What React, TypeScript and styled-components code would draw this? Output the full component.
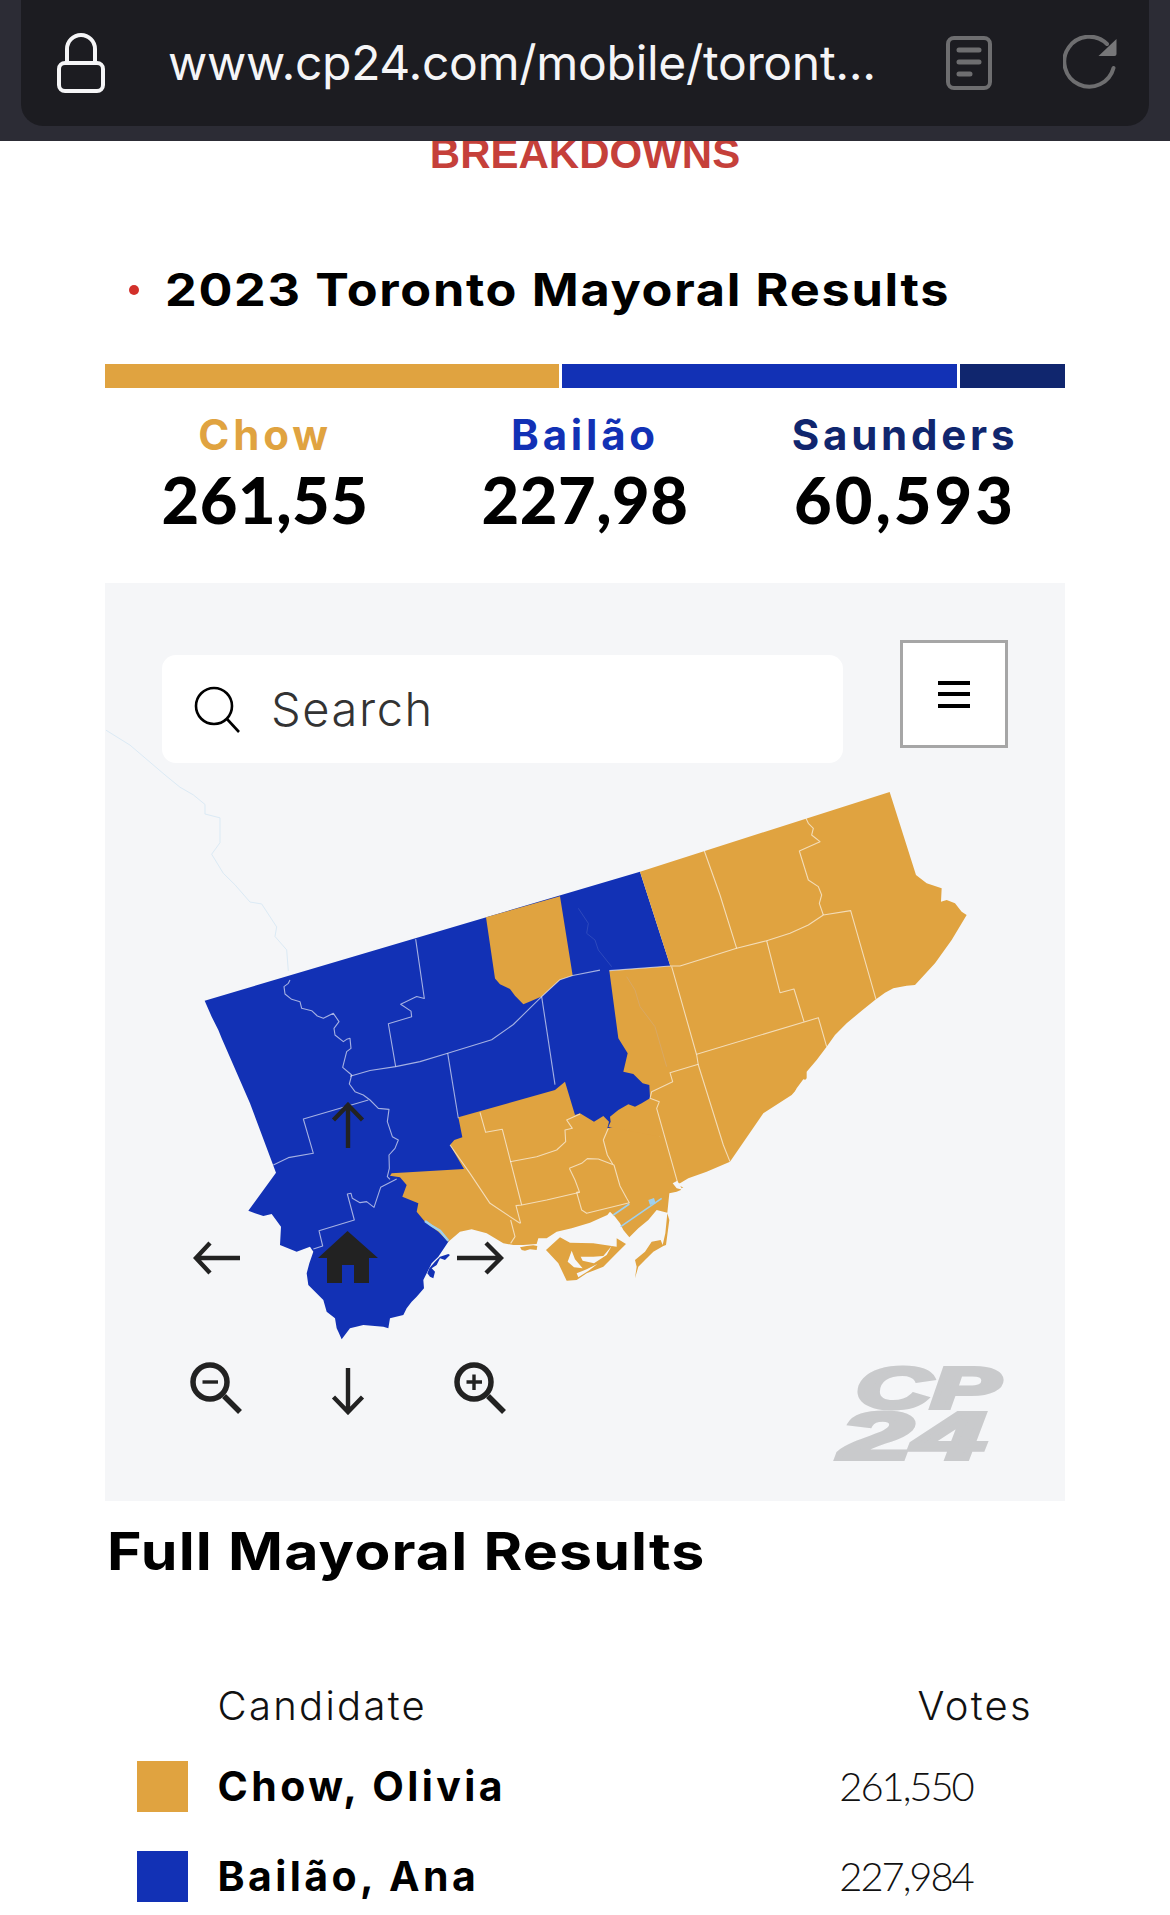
import React from "react";
import styled, { createGlobalStyle } from "styled-components";

const ORANGE = "#e0a340";
const BLUE = "#1231b5";
const NAVY = "#10266e";
const BG = "#f5f6f8";
const WIDE = `Inter, "Liberation Sans", sans-serif`;
const NARROW = `Lato, "Liberation Sans", sans-serif`;

const Global = createGlobalStyle`
  html, body { margin: 0; padding: 0; background: #fff; }
`;

const Page = styled.div`
  width: 1170px;
  height: 1915px;
  overflow: hidden;
  background: #fff;
`;

const BrowserBar = styled.header`
  position: relative;
  z-index: 2;
  height: 141px;
  background: #2c2c35;
  padding: 0 21px;
  box-sizing: border-box;
`;

const AddressPill = styled.div`
  height: 126px;
  background: #1c1c21;
  border-radius: 0 0 22px 22px;
  display: flex;
  align-items: center;
  padding-left: 36px;
  padding-right: 28.5px;
  box-sizing: border-box;
`;

const AddressText = styled.span`
  font-family: ${WIDE};
  font-size: 48px;
  line-height: 126px;
  color: #f5f5f7;
  margin-left: 63px;
  letter-spacing: -0.3px;
  flex: 1;
  white-space: nowrap;
`;

const BarIcon = styled.svg`
  display: block;
  flex: none;
`;

const Breakdowns = styled.div`
  margin-top: -7px;
  height: 40px;
  font: bold 42px/40px "Liberation Sans", Arial, sans-serif;
  color: #c5403a;
  text-align: center;
`;

const TitleRow = styled.div`
  display: flex;
  align-items: center;
  margin-top: 86px;
  padding-left: 129px;
  height: 60px;
`;

const RedDot = styled.span`
  width: 10px;
  height: 10px;
  border-radius: 50%;
  background: #d2302a;
  margin-right: 26px;
`;

const Title = styled.h1`
  margin: 0;
  font: 700 45px/60px ${WIDE};
  letter-spacing: 1.5px;
  color: #000;
  white-space: nowrap;
  transform: scaleX(1.12);
  transform-origin: left center;
`;

const ShareBar = styled.div`
  display: flex;
  gap: 3px;
  margin: 44px 105px 0;
  height: 24px;
`;

const ShareSegment = styled.div<{ $color: string; $w: number }>`
  width: ${(p) => p.$w}px;
  background: ${(p) => p.$color};
`;

const Tallies = styled.div`
  display: grid;
  grid-template-columns: repeat(3, 320px);
  margin: 20px 105px 0;
`;

const Tally = styled.div`
  text-align: center;
`;

const TallyName = styled.div<{ $color: string }>`
  font: 700 42px/53px ${WIDE};
  letter-spacing: 3.8px;
  color: ${(p) => p.$color};
`;

const TallyVotes = styled.div<{ $spread?: number }>`
  font: 900 65px/76px ${NARROW};
  letter-spacing: ${(p) => p.$spread ?? 0.5}px;
  color: #000;
`;

const MapPanel = styled.section`
  position: relative;
  width: 960px;
  height: 918px;
  margin: 46px 105px 0;
  background: ${BG};
  overflow: hidden;
`;

const Toolbar = styled.div`
  position: relative;
  z-index: 1;
  display: flex;
  align-items: flex-start;
  gap: 57px;
  padding: 57px 0 0 57px;
`;

const SearchBox = styled.div`
  width: 681px;
  height: 108px;
  margin-top: 15px;
  background: #fff;
  border-radius: 14px;
  display: flex;
  align-items: center;
  padding-left: 30px;
  box-sizing: border-box;
`;

const SearchText = styled.span`
  margin-left: 29px;
  font: 300 47px/108px ${WIDE};
  letter-spacing: 1.6px;
  color: #333;
`;

const MenuButton = styled.div`
  width: 108px;
  height: 108px;
  box-sizing: border-box;
  background: #fff;
  border: 3px solid #a6a6a6;
  display: flex;
  flex-direction: column;
  align-items: center;
  justify-content: center;
  gap: 7.5px;
`;

const MenuLine = styled.span`
  width: 32px;
  height: 4px;
  background: #000;
`;

const MapCanvas = styled.svg`
  position: absolute;
  left: 0;
  top: 0;
`;

const Ward = styled.polygon<{ $fill: string }>`
  fill: ${(p) => p.$fill};
`;

const Border = styled.polyline`
  fill: none;
  stroke: #fff;
  stroke-opacity: 0.62;
  stroke-width: 1.1px;
  stroke-linejoin: round;
  vector-effect: non-scaling-stroke;
`;

const Stream = styled.polyline<{ $color: string; $w?: number }>`
  fill: none;
  stroke: ${(p) => p.$color};
  stroke-width: ${(p) => p.$w ?? 1}px;
  vector-effect: non-scaling-stroke;
`;

const ControlIcon = styled.svg<{ $x: number; $y: number }>`
  position: absolute;
  left: ${(p) => p.$x - 105}px;
  top: ${(p) => p.$y - 583}px;
  display: block;
`;

const LogoCanvas = styled.svg`
  position: absolute;
  left: 705px;
  top: 755px;
  overflow: visible;
`;

const LogoText = styled.text<{ $size: number }>`
  font: italic 900 ${(p) => p.$size}px "Liberation Sans", Arial, sans-serif;
  fill: #c9cacc;
  stroke: #c9cacc;
  stroke-width: 4px;
`;

const ResultsHeading = styled.h2`
  margin: 20px 0 0 107px;
  font: 700 52px/62px ${WIDE};
  letter-spacing: 1px;
  color: #000;
  white-space: nowrap;
  transform: scaleX(1.135);
  transform-origin: left center;
`;

const ResultsTable = styled.div`
  display: grid;
  grid-template-columns: 51px 620px 180px;
  column-gap: 29.5px;
  margin: 0 0 0 137px;
  padding-top: 100px;
`;

const HeadCell = styled.div<{ $right?: boolean }>`
  grid-column: ${(p) => (p.$right ? 3 : 2)};
  font: 300 40px/46px ${WIDE};
  letter-spacing: 2.3px;
  color: #111;
  text-align: ${(p) => (p.$right ? "right" : "left")};
  ${(p) => (p.$right ? "margin-right: 14px;" : "")}
  height: 78px;
`;

const Swatch = styled.div<{ $color: string }>`
  width: 51px;
  height: 51px;
  background: ${(p) => p.$color};
  margin-bottom: 39px;
`;

const NameCell = styled.div`
  font: 700 41px/51px ${WIDE};
  letter-spacing: 3.4px;
  color: #000;
`;

const VotesCell = styled.div`
  font: 300 40px/51px ${NARROW};
  letter-spacing: -2.1px;
  color: #111;
  width: 134px;
  text-align: center;
  margin-left: -28px;
`;

const Z5 = "translate(190 980) scale(0.33333)";
const Z6 = "translate(390 1060) scale(0.33333)";
const Z3 = "translate(560 770) scale(0.33333)";
const Z2 = "translate(180 770) scale(0.33333 0.3827)";

const BLUE_AREA =
  "44,62 1350,-325 1441,-42 1395,400 1000,650 800,730 775,785 745,830 725,850 710,880 700,900 702,925 680,950 665,965 650,985 640,1005 600,1015 595,1045 580,1040 520,1035 480,1045 455,1078 445,1055 440,1045 435,1015 410,995 400,960 355,915 350,880 358,850 370,815 360,800 320,815 270,795 273,740 245,702 220,708 195,700 175,692 258,578 180,370 95,175 85,150 65,110";

const EAST_AREA =
  "240,305 989,66 1068,315 1100,340 1145,355 1143,395 1160,390 1185,400 1205,425 1220,435 1175,510 1125,580 1065,645 1040,647 1000,655 975,668 945,690 905,722 860,760 825,795 800,830 770,870 740,905 740,925 695,975 610,1030 510,1175 440,1205 385,1225 360,1240 340,1240 300,1100 145,1070 152,1055 150,1040 175,1020 205,1003 225,1010 245,1000 270,985 268,945 248,940 220,912 190,905 203,850 175,805 148,602 331,588";

const CENTRAL_AREA =
  "205,172 495,90 525,65 555,165 570,160 612,185 640,168 657,185 652,205 760,180 880,300 875,345 852,362 870,378 885,385 860,395 838,400 832,458 800,450 775,480 745,505 718,532 700,510 690,490 675,470 660,455 652,465 630,475 600,488 545,505 500,515 470,535 445,535 440,552 400,555 370,555 340,550 290,520 245,508 210,515 175,545 145,515 105,485 80,455 85,430 37,410 50,375 30,352 0,347 5,340 222,327 180,255 193,240 217,232";

const ISLAND =
  "468,570 510,532 540,548 610,550 680,560 680,535 708,552 680,580 640,620 590,640 560,660 530,662 505,610";

const SPIT =
  "832,460 826,520 818,555 812,540 785,545 765,575 735,600 740,620 735,655 745,620 765,600 790,575 820,558 828,555 838,480";

const Icon = {
  up: "M9.5 18 L24 3 L38.5 18 M24 3 V46",
  down: "M9.5 32 L24 47 L38.5 32 M24 47 V3",
  left: "M17 3 L3 18 L17 33 M3 18 H47",
  right: "M30 3 L45 18 L30 33 M45 18 H1",
};

export default function App() {
  return (
    <Page>
      <Global />
      <BrowserBar>
        <AddressPill>
          <BarIcon width="48" height="60" viewBox="0 0 48 60">
            <path d="M10 30 V16 a14 14 0 0 1 28 0 V30" fill="none" stroke="#f5f5f7" strokeWidth="4" />
            <rect x="2" y="30" width="44" height="28" rx="6" fill="none" stroke="#f5f5f7" strokeWidth="4" />
          </BarIcon>
          <AddressText>www.cp24.com/mobile/toront...</AddressText>
          <BarIcon width="46" height="54" viewBox="0 0 46 54" style={{ marginRight: 71 }}>
            <rect x="2" y="2" width="42" height="50" rx="6" fill="none" stroke="#6e6e70" strokeWidth="4" />
            <path d="M13 14 H33 M13 26 H33 M13 38 H24" stroke="#6e6e70" strokeWidth="5" strokeLinecap="round" />
          </BarIcon>
          <BarIcon width="58" height="56" viewBox="0 0 58 56">
            <path d="M50.5 33 A25 25 0 1 1 44 9" fill="none" stroke="#6e6e70" strokeWidth="4" strokeLinecap="round" />
            <path d="M53.5 4 V19 Q53.5 21 51.5 21 H35.5 Z" fill="#777779" />
          </BarIcon>
        </AddressPill>
      </BrowserBar>

      <Breakdowns>BREAKDOWNS</Breakdowns>

      <TitleRow>
        <RedDot />
        <Title>2023 Toronto Mayoral Results</Title>
      </TitleRow>

      <ShareBar>
        <ShareSegment $color={ORANGE} $w={454} />
        <ShareSegment $color={BLUE} $w={396} />
        <ShareSegment $color={NAVY} $w={105} />
      </ShareBar>

      <Tallies>
        <Tally>
          <TallyName $color={ORANGE}>Chow</TallyName>
          <TallyVotes>261,55</TallyVotes>
        </Tally>
        <Tally>
          <TallyName $color={BLUE}>Bailão</TallyName>
          <TallyVotes>227,98</TallyVotes>
        </Tally>
        <Tally>
          <TallyName $color={NAVY}>Saunders</TallyName>
          <TallyVotes $spread={3}>60,593</TallyVotes>
        </Tally>
      </Tallies>

      <MapPanel>
        <MapCanvas width="960" height="918" viewBox="105 583 960 918">
          <g transform={Z2}>
            <Stream $color="#dbeaf5" points="-222,-104 -150,-65 -45,13 0,45 40,65 75,90 75,115 120,125 120,190 95,220 130,270 165,300 210,345 245,350 290,410 285,435 320,470 325,525" />
          </g>
          <g transform={Z5}>
            <Ward $fill={BLUE} points={BLUE_AREA} />
          </g>
          <g transform={Z6}>
            <Ward $fill={BLUE} points="180,585 165,600 150,595 140,615 125,625 135,635 130,655 120,650 112,640 118,625 135,605 150,590 175,582" />
            <Ward $fill={ORANGE} points={CENTRAL_AREA} />
            <Ward $fill={ORANGE} points={ISLAND} />
            <Ward $fill={ORANGE} points={SPIT} />
            <Ward $fill={ORANGE} points="390,562 410,558 430,556 442,558 440,570 420,568 405,572 395,570" />
            <Ward $fill={BG} points="545,572 555,598 578,625 552,622 533,605" />
            <Ward $fill={BG} points="572,590 610,590 640,588 665,558 650,585 612,610 578,602" />
            <Ward $fill={BG} points="560,640 590,628 622,612 596,632 565,652" />
            <Stream $color="#9fd0ee" $w={1.6} points="692,500 815,415" />
            <Stream $color="#9fd0ee" $w={1.6} points="670,465 718,432" />
            <Ward $fill="#9fd0ee" points="775,420 792,414 797,430 780,435" />
            <Stream $color="#9fd0ee" $w={2.4} points="105,483 125,497 150,512 175,542" />
          </g>
          <g transform={Z3}>
            <Ward $fill={ORANGE} points={EAST_AREA} />
            <Ward $fill={BG} points="338,1240 352,1232 365,1255 380,1245 392,1250 385,1270 372,1272 362,1258 350,1255" />
            <Ward $fill={BG} points="710,955 730,928 745,932 740,958 725,972 700,985 692,990" />
          </g>
          <g transform={Z2}>
            <Ward $fill={ORANGE} points="918,385 1140,330 1178,537 1140,548 1085,592 1050,605 1030,612 1005,590 990,572 960,560 945,545" />
            <Border points="707,442 733,597 710,592 662,612 693,630 695,645 625,663 647,775" />
            <Border points="510,800 570,785 647,775 720,762 803,740 935,705 1000,665 1085,592 1140,548 1178,537 1260,523" />
            <Border points="1085,592 1125,822" />
            <Border points="803,740 835,910" />
          </g>
          <g transform={Z5}>
            <Border points="300,0 295,10 282,20 285,42 305,58 330,65 335,85 365,92 382,108 400,115 430,100 447,125 432,145 435,165 460,185 470,178 480,175 483,205 470,215 458,262 485,285 478,312 495,335 520,345 540,360 565,385 597,388 592,425 607,470 625,480 615,505 597,525 598,565 592,590 600,598" />
            <Border points="535,360 340,417 370,520 295,533 250,555" />
            <Border points="620,597 572,622 552,682 530,665 510,668 487,655 483,640 472,642 493,720 387,752 398,798 370,807" />
          </g>
          <g transform={Z3}>
            <Stream $color="#2d49bd" points="55,415 85,460 80,490 105,510 115,540 155,590" />
            <Stream $color="#d9a863" points="200,620 225,660 240,710 285,770 320,890" />
            <Border points="148,602 331,588 360,588 530,535 620,512 690,490 745,465 790,435 872,422 890,485 948,688" />
            <Border points="433,243 480,375 530,535" />
            <Border points="738,145 745,160 760,175 755,195 780,215 718,243 745,330 775,350 785,375 778,400 790,435" />
            <Border points="620,512 660,668 702,657 732,755" />
            <Border points="335,590 410,855 415,885 490,1125 510,1175" />
            <Border points="410,853 775,743 800,830" />
            <Border points="415,883 330,908 338,935 275,965 270,985 298,995 290,1015 352,1235" />
          </g>
          <g transform={Z6}>
            <Border points="270,157 287,217 337,208 358,290 395,435 378,437 392,490" />
            <Border points="180,255 240,340 300,430 390,490" />
            <Border points="360,305 440,290 500,270 527,245 525,210 547,205 530,180 570,162" />
            <Border points="395,435 470,420 570,397" />
            <Border points="538,325 575,310 592,296 625,297 672,315 690,378 710,415 718,428 590,460 575,450 560,397 568,395 555,360 538,325" />
            <Border points="655,205 640,240 652,285 668,312" />
            <Border points="362,480 375,530 362,550" />
          </g>
        </MapCanvas>

        <Toolbar>
          <SearchBox>
            <BarIcon width="50" height="50" viewBox="0 0 50 50">
              <circle cx="22" cy="22" r="18" fill="none" stroke="#000" strokeWidth="2.6" />
              <path d="M35 35 L47 48" stroke="#000" strokeWidth="2.6" />
            </BarIcon>
            <SearchText>Search</SearchText>
          </SearchBox>
          <MenuButton>
            <MenuLine />
            <MenuLine />
            <MenuLine />
          </MenuButton>
        </Toolbar>

        <ControlIcon $x={324} $y={1102} width="48" height="50" viewBox="0 0 48 50">
          <path d={Icon.up} fill="none" stroke="#222" strokeWidth="4.4" />
        </ControlIcon>
        <ControlIcon $x={193} $y={1240} width="48" height="36" viewBox="0 0 48 36">
          <path d={Icon.left} fill="none" stroke="#222" strokeWidth="4.4" />
        </ControlIcon>
        <ControlIcon $x={456} $y={1240} width="48" height="36" viewBox="0 0 48 36">
          <path d={Icon.right} fill="none" stroke="#222" strokeWidth="4.4" />
        </ControlIcon>
        <ControlIcon $x={324} $y={1365} width="48" height="50" viewBox="0 0 48 50">
          <path d={Icon.down} fill="none" stroke="#222" strokeWidth="4.4" />
        </ControlIcon>
        <ControlIcon $x={318} $y={1231} width="60" height="52" viewBox="0 0 60 52">
          <path d="M0 27 L29.5 0 L60 27 H51 V52 H36 V34 H24 V52 H9 V27 Z" fill="#222" />
        </ControlIcon>
        <ControlIcon $x={189.5} $y={1362} width="56" height="56" viewBox="0 0 56 56">
          <circle cx="20" cy="20" r="17" fill="none" stroke="#222" strokeWidth="5.5" />
          <path d="M12.5 20 H28" stroke="#222" strokeWidth="3.4" />
          <path d="M34 34 L50 50" stroke="#222" strokeWidth="5.5" />
        </ControlIcon>
        <ControlIcon $x={453.5} $y={1362} width="56" height="56" viewBox="0 0 56 56">
          <circle cx="20" cy="20" r="17" fill="none" stroke="#222" strokeWidth="5.5" />
          <path d="M12.5 20 H28 M20 12.5 V28" stroke="#222" strokeWidth="3.4" />
          <path d="M34 34 L50 50" stroke="#222" strokeWidth="5.5" />
        </ControlIcon>

        <LogoCanvas width="220" height="130" viewBox="0 0 220 130">
          <LogoText $size={58} x="46" y="70" textLength="144" lengthAdjust="spacingAndGlyphs">CP</LogoText>
          <LogoText $size={66} x="30" y="121" textLength="146" lengthAdjust="spacingAndGlyphs">24</LogoText>
        </LogoCanvas>
      </MapPanel>

      <ResultsHeading>Full Mayoral Results</ResultsHeading>

      <ResultsTable>
        <HeadCell>Candidate</HeadCell>
        <HeadCell $right>Votes</HeadCell>
        <Swatch $color={ORANGE} />
        <NameCell>Chow, Olivia</NameCell>
        <VotesCell>261,550</VotesCell>
        <Swatch $color={BLUE} />
        <NameCell>Bailão, Ana</NameCell>
        <VotesCell>227,984</VotesCell>
      </ResultsTable>
    </Page>
  );
}
